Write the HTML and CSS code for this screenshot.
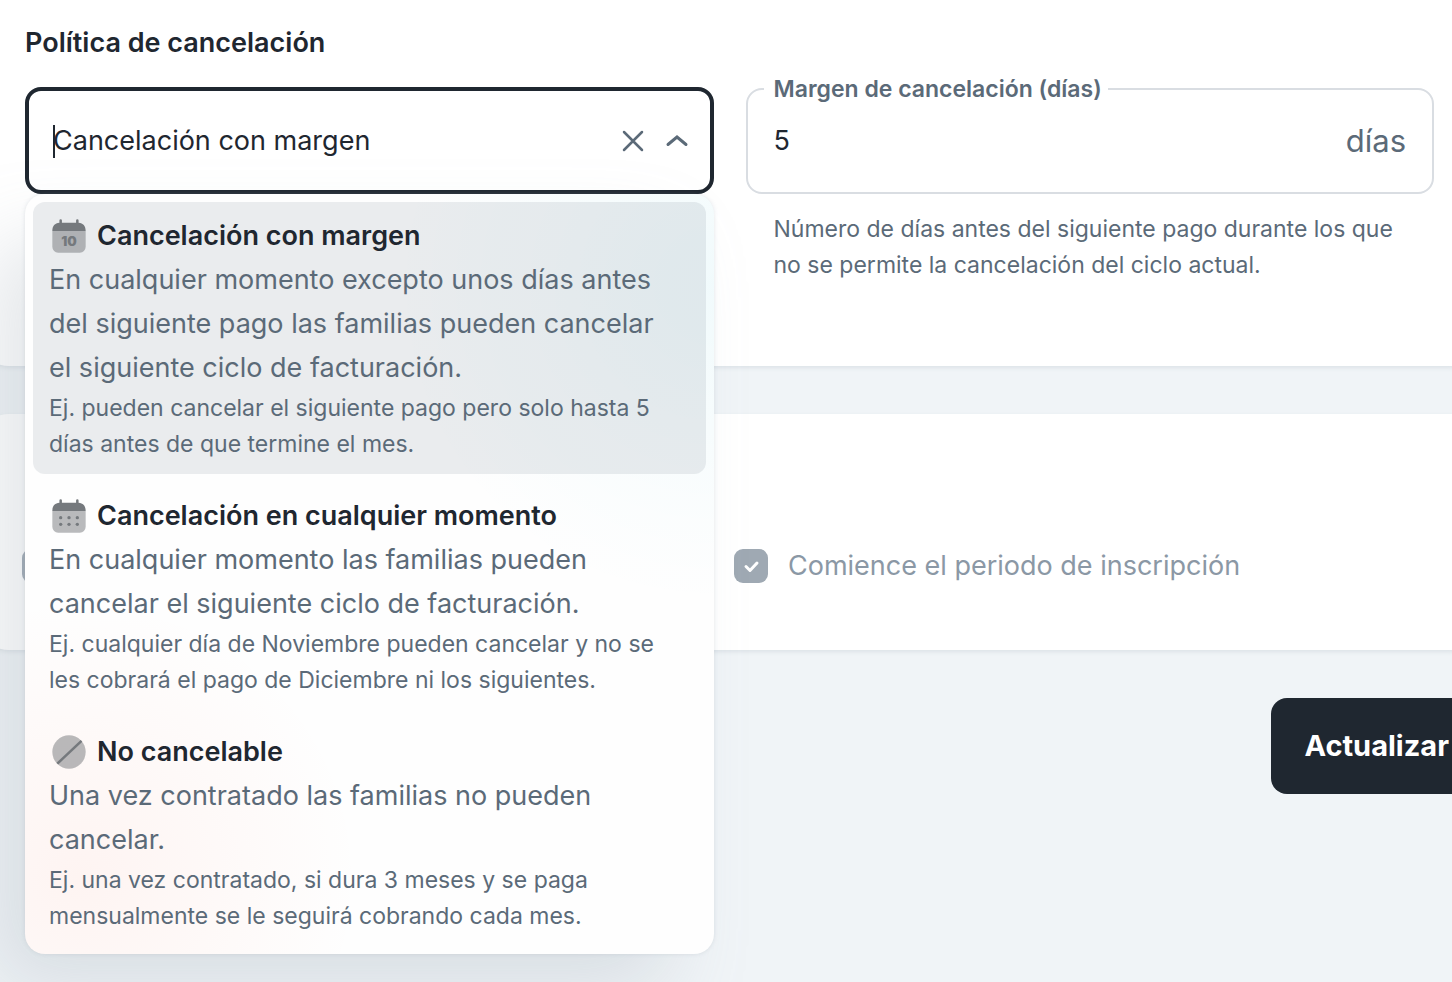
FILE: index.html
```
<!DOCTYPE html>
<html lang="es">
<head>
  <meta charset="UTF-8" />
  <meta name="viewport" content="width=device-width, initial-scale=1" />
  <title>Política de cancelación</title>
  <link rel="stylesheet" href="styles.css">
</head>
<body>
  <form class="page">
    <section class="card policy-card">
      <h2>Política de cancelación</h2>
      <div class="fields">
        <div class="autocomplete">
          <div class="autocomplete-field">
            <input type="text" id="policyInput" role="combobox" aria-expanded="true" aria-controls="policyList" aria-label="Política de cancelación" value="Cancelación con margen" />
            <button type="button" class="icon-button" aria-label="Borrar">
              <svg width="32" height="32" viewBox="0 0 32 32"><path d="M7 7l18 18M25 7L7 25" /></svg>
            </button>
            <button type="button" class="icon-button" aria-label="Cerrar">
              <svg width="32" height="32" viewBox="0 0 32 32"><path class="chevron" d="M7 19.500l9-7.500 9 7.500" /></svg>
            </button>
          </div>

          <ul class="options" id="policyList" role="listbox" aria-label="Política de cancelación">
            <li class="option selected" role="option" aria-selected="true">
              <div class="option-title">
                <svg width="40" height="40" viewBox="0 0 24 24">
                  <path class="light" d="M2 9h20v9.500a3.500 3.500 0 0 1-3.500 3.500h-13A3.500 3.500 0 0 1 2 18.500z" />
                  <path class="dark" d="M2 9C2 6 3.500 4.300 6.250 4.100V2.750a.75.75 0 0 1 1.500 0V4h8.500V2.750a.75.75 0 0 1 1.500 0V4.100C20.500 4.300 22 6 22 9z" />
                  <text class="icon-number" x="12" y="17.700" text-anchor="middle">10</text>
                </svg>
                <span>Cancelación con margen</span>
              </div>
              <p>En cualquier momento excepto unos días antes del siguiente pago las familias pueden cancelar el siguiente ciclo de facturación.</p>
              <small>Ej. pueden cancelar el siguiente pago pero solo hasta 5 días antes de que termine el mes.</small>
            </li>
            <li class="option" role="option" aria-selected="false">
              <div class="option-title">
                <svg width="40" height="40" viewBox="0 0 24 24">
                  <path class="light" d="M2 9h20v9.500a3.500 3.500 0 0 1-3.500 3.500h-13A3.500 3.500 0 0 1 2 18.500z" />
                  <path class="dark" d="M2 9C2 6 3.500 4.300 6.250 4.100V2.750a.75.75 0 0 1 1.500 0V4h8.500V2.750a.75.75 0 0 1 1.500 0V4.100C20.500 4.300 22 6 22 9z" />
                  <g class="dark">
                    <circle cx="7" cy="13" r="1" /><circle cx="12" cy="13" r="1" /><circle cx="17" cy="13" r="1" />
                    <circle cx="7" cy="17" r="1" /><circle cx="12" cy="17" r="1" /><circle cx="17" cy="17" r="1" />
                  </g>
                </svg>
                <span>Cancelación en cualquier momento</span>
              </div>
              <p>En cualquier momento las familias pueden cancelar el siguiente ciclo de facturación.</p>
              <small>Ej. cualquier día de Noviembre pueden cancelar y no se les cobrará el pago de Diciembre ni los siguientes.</small>
            </li>
            <li class="option" role="option" aria-selected="false">
              <div class="option-title">
                <svg width="40" height="40" viewBox="0 0 24 24">
                  <circle class="light" cx="12" cy="12" r="10" />
                  <path class="slash" d="M5 19L19.500 5.300" />
                </svg>
                <span>No cancelable</span>
              </div>
              <p>Una vez contratado las familias no pueden cancelar.</p>
              <small>Ej. una vez contratado, si dura 3 meses y se paga mensualmente se le seguirá cobrando cada mes.</small>
            </li>
          </ul>
        </div>

        <div class="margin-field">
          <fieldset>
            <legend><label for="marginInput">Margen de cancelación (días)</label></legend>
            <div class="margin-row">
              <input type="text" id="marginInput" inputmode="numeric" value="5" aria-describedby="marginHelp" />
              <span class="unit">días</span>
            </div>
          </fieldset>
          <p class="helper" id="marginHelp">Número de días antes del siguiente pago durante los que no se permite la cancelación del ciclo actual.</p>
        </div>
      </div>
    </section>

    <section class="card checks-card">
      <div class="check">
        <span class="check-box">
          <input type="checkbox" aria-label="Inicio" checked disabled />
        </span>
      </div>
      <div class="check">
        <span class="check-box">
          <input type="checkbox" id="startCheck" checked disabled />
          <svg width="34" height="34" viewBox="0 0 34 34"><path d="M12 17.500l4 4 7-7.500" /></svg>
        </span>
        <label for="startCheck">Comience el periodo de inscripción</label>
      </div>
    </section>

    <div class="actions">
      <button type="submit" class="submit-button">Actualizar</button>
    </div>
  </form>
</body>
</html>
```
FILE: styles.css
```
body {
  margin: 0;
  min-height: 100vh;
  background: #f0f4f7;
  color: #1f2730;
  font-family: Inter, "Liberation Sans", sans-serif;
  font-size: 27px;
  line-height: 44px;
  overflow-x: hidden;
}
h2, p, ul {
  margin: 0;
  padding: 0;
}
input, button {
  font: inherit;
  color: inherit;
}
.page {
  margin: 0 -30px 0 -23px;
}
.card {
  background: #fff;
  border-radius: 32px;
  box-shadow: 0 2px 4px rgba(145, 158, 171, 0.2);
}
.policy-card {
  padding: 21px 48px 83px;
  border-top-left-radius: 0;
  border-top-right-radius: 0;
}
h2 {
  margin-bottom: 12px;
  font-size: 27px;
  font-weight: 600;
}
.fields {
  display: grid;
  grid-template-columns: 1fr 1fr;
  align-items: start;
  gap: 32px;
}

/* autocomplete */
.autocomplete {
  position: relative;
  z-index: 1;
  margin-top: 10px;
}
.autocomplete-field {
  position: relative;
  display: flex;
  align-items: center;
  gap: 12px;
  padding: 28px 17px 27px 24px;
  border: 4px solid #1f2730;
  border-radius: 16px;
}
/* text cursor */
.autocomplete-field::before {
  content: "";
  position: absolute;
  left: 24px;
  width: 2px;
  height: 33px;
  background: #1f2730;
}
.autocomplete-field input, .margin-row input {
  flex: 1;
  min-width: 0;
  height: 44px;
  padding: 0;
  border: none;
  outline: none;
  background: none;
}
.icon-button {
  display: flex;
  padding: 0;
  border: none;
  background: none;
  cursor: pointer;
}
.icon-button path {
  fill: none;
  stroke: #5b6a78;
  stroke-width: 2.5;
  stroke-linecap: round;
}
.icon-button .chevron {
  stroke-width: 3;
}
.options {
  position: absolute;
  top: 100%;
  left: 0;
  right: 0;
  padding: 8px;
  border-radius: 20px;
  list-style: none;
  background:
    radial-gradient(circle at 100% 12%, rgba(0, 184, 217, 0.05), rgba(0, 184, 217, 0) 320px),
    radial-gradient(circle at 8% 90%, rgba(255, 86, 48, 0.06), rgba(255, 86, 48, 0) 280px),
    #fefefe;
  box-shadow: 0 0 4px rgba(145, 158, 171, 0.24), -40px 40px 80px -8px rgba(145, 158, 171, 0.26);
}
.option {
  padding: 12px 16px;
  border-radius: 12px;
  cursor: pointer;
}
.option + .option {
  margin-top: 8px;
}
.option.selected {
  background: rgba(120, 132, 145, 0.15);
}
.option-title {
  display: flex;
  align-items: center;
  gap: 8px;
  height: 44px;
  font-weight: 600;
}
.option p {
  padding-right: 16px;
  color: #5b6a78;
}
.option small {
  display: block;
  color: #5b6a78;
  font-size: 23px;
  line-height: 36px;
}
.light {
  fill: #6f7175;
  opacity: 0.48;
}
.dark, .icon-number {
  fill: #75797d;
}
.icon-number {
  font-size: 8px;
  font-weight: 900;
}
.slash {
  stroke: #75797d;
  stroke-width: 1.5;
}

/* outlined field */
fieldset {
  min-width: 0;
  margin: 0;
  padding: 0;
  border: 2px solid #d9dde2;
  border-radius: 16px;
}
legend {
  margin-left: 16px;
  padding: 0 6px 0 10px;
  color: #5b6a78;
  font-size: 23px;
  font-weight: 600;
  line-height: 24px;
}
.margin-row {
  display: flex;
  align-items: center;
  padding: 18px 26px 29px;
}
.unit {
  color: #5b6a78;
  font-size: 31px;
}
.helper {
  margin: 17px 28px 0;
  color: #5b6a78;
  font-size: 23px;
  line-height: 36px;
}

/* checkboxes */
.checks-card {
  display: grid;
  grid-template-columns: 1fr 1fr;
  gap: 12px;
  margin-top: 48px;
  padding: 130px 48px 62px 45px;
}
.check {
  display: flex;
  align-items: center;
  gap: 20px;
  color: #8b98a5;
}
.check-box {
  display: grid;
}
.check-box input, .check-box svg {
  grid-area: 1 / 1;
}
.check-box input {
  appearance: none;
  width: 34px;
  height: 34px;
  margin: 0;
  border-radius: 9px;
  background: #9fa9b3;
}
.check-box path {
  fill: none;
  stroke: #fff;
  stroke-width: 3;
  stroke-linecap: round;
  stroke-linejoin: round;
}

.actions {
  display: flex;
  justify-content: flex-end;
  margin-top: 48px;
}
.submit-button {
  padding: 26px 33px;
  border: none;
  border-radius: 16px;
  background: #1f2730;
  color: #fff;
  font-size: 29px;
  font-weight: 700;
  line-height: 44px;
  cursor: pointer;
}
```
